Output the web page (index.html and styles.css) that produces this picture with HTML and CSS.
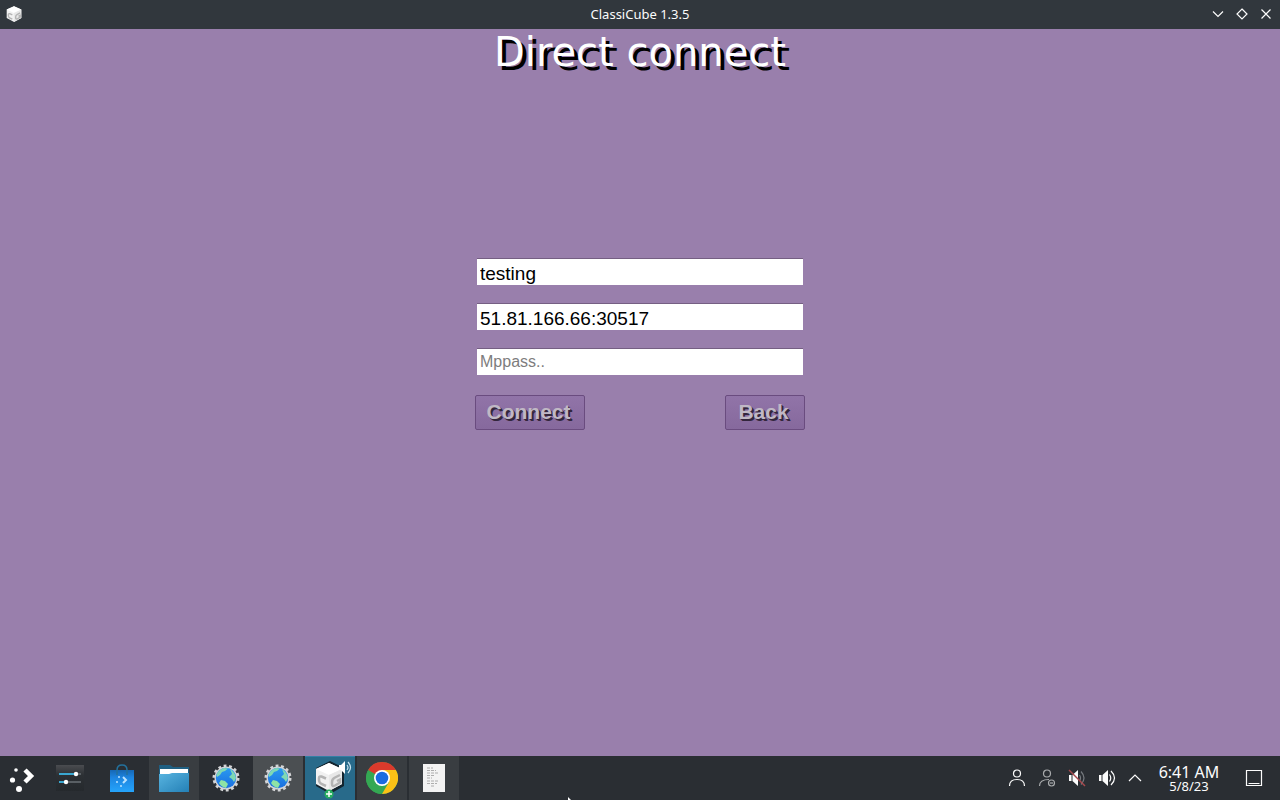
FILE: index.html
```html
<!DOCTYPE html>
<html lang="en">
<head>
    <meta charset="UTF-8">
    <meta name="viewport" content="width=device-width, initial-scale=1.0">
    <title>ClassiCube 1.3.5</title>
    <link rel="stylesheet" href="styles.css">
</head>
<body>
    <!-- shared icon shapes -->
    <svg class="defs" aria-hidden="true">
        <defs>
            <linearGradient id="globe-blue" x1="0" y1="0" x2="0" y2="1">
                <stop offset="0" stop-color="#2a9af0"/>
                <stop offset="1" stop-color="#1a6fe0"/>
            </linearGradient>
            <linearGradient id="bag-blue" x1="0" y1="0" x2="0" y2="1">
                <stop offset="0" stop-color="#1667b4"/>
                <stop offset="0.35" stop-color="#1d85e0"/>
                <stop offset="1" stop-color="#25a4fb"/>
            </linearGradient>
            <linearGradient id="folder-blue" x1="0" y1="0" x2="1" y2="1">
                <stop offset="0" stop-color="#58b4e0"/>
                <stop offset="1" stop-color="#2480b6"/>
            </linearGradient>
            <linearGradient id="settings-grey" x1="0" y1="0" x2="0" y2="1">
                <stop offset="0" stop-color="#4a4c50"/>
                <stop offset="0.4" stop-color="#2c3034"/>
                <stop offset="1" stop-color="#25292d"/>
            </linearGradient>
            <symbol id="cube" viewBox="0 0 32 32">
                <path d="M16 2L29 8V23L16 30L3 23V8Z" fill="#f1f1f1"/>
                <path d="M16 2L29 8L16 14L3 8Z" fill="#ffffff"/>
                <path d="M16 14L29 8V23L16 30Z" fill="#e8e8e8"/>
                <path d="M13 17.500L8.500 15.500Q6 15 6 17V19Q6 21.500 8.500 23L13 25" fill="none" stroke="#b4b4b4" stroke-width="2.500"/>
                <path d="M27 14L22 16.500Q19 18 19 21V23Q19 26 22 24.500L27 21.500V18.500L24 20" fill="none" stroke="#b4b4b4" stroke-width="2.500"/>
            </symbol>
            <symbol id="globe" viewBox="0 0 28 28">
                <circle cx="14" cy="14" r="12" fill="none" stroke="#d4d5d7" stroke-width="3" stroke-dasharray="2.800 2.584"/>
                <circle cx="14" cy="14" r="11.500" fill="#d4d5d7"/>
                <circle cx="14" cy="14" r="10.200" fill="url(#globe-blue)"/>
                <path d="M4.500 11Q6 6 12 4L16 4.500L13 7L10 8L8 11L5 13Z" fill="#7fd8b4"/>
                <path d="M18 5Q23 8 24 14L22 18L20 15L17 13L20 10Z" fill="#7fd8b4"/>
                <path d="M9 16L13 17L16 20L14 24Q9 23 7 19Z" fill="#8fe3a5"/>
            </symbol>
        </defs>
    </svg>

    <header class="titlebar">
        <svg class="app-icon" viewBox="0 0 32 32"><use href="#cube"/></svg>
        <span class="window-title">ClassiCube 1.3.5</span>
        <div class="window-buttons">
            <button type="button" aria-label="Minimize">
                <svg viewBox="0 0 12 12"><path d="M1 3.500L6 8.500L11 3.500"/></svg>
            </button>
            <button type="button" aria-label="Maximize">
                <svg viewBox="0 0 12 12"><path d="M6 1L11 6L6 11L1 6Z"/></svg>
            </button>
            <button type="button" aria-label="Close">
                <svg viewBox="0 0 12 12"><path d="M1.500 1.500L10.500 10.500M10.500 1.500L1.500 10.500"/></svg>
            </button>
        </div>
    </header>

    <main class="launcher">
        <h1>Direct connect</h1>
        <form class="connect-form">
            <input type="text" aria-label="Username" value="testing">
            <input type="text" aria-label="IP address and port" value="51.81.166.66:30517">
            <input type="text" aria-label="Mppass" placeholder="Mppass..">
            <div class="form-buttons">
                <button type="button" class="connect">Connect</button>
                <button type="button" class="back">Back</button>
            </div>
        </form>
    </main>

    <footer class="taskbar">
        <button type="button" class="start" aria-label="Application launcher">
            <svg viewBox="0 0 28 28" fill="#fff">
                <circle cx="9" cy="6" r="1.800"/>
                <circle cx="5.500" cy="16" r="2.600"/>
                <circle cx="12" cy="25" r="3"/>
                <path d="M18 6L24 12L18 18" fill="none" stroke="#fff" stroke-width="4.500"/>
            </svg>
        </button>
        <button type="button" class="task" aria-label="System settings">
            <svg viewBox="0 0 32 32">
                <path d="M2 3H30V29H2Z" fill="url(#settings-grey)"/>
                <path d="M5 12H22M5 20H12" stroke="#3aa7d0" stroke-width="2"/>
                <path d="M22 12H27M12 20H27" stroke="#6a7075" stroke-width="1.500"/>
                <circle cx="22" cy="12" r="2.200" fill="#fff"/>
                <circle cx="12" cy="20" r="2.200" fill="#fff"/>
            </svg>
        </button>
        <button type="button" class="task" aria-label="Software center">
            <svg viewBox="0 0 32 32">
                <path d="M4 8H28V30H4Z" fill="url(#bag-blue)"/>
                <path d="M11 13V8Q11 3 16 3Q21 3 21 8V13" fill="none" stroke="#23719c" stroke-width="1.500"/>
                <path d="M17 15L20 18L17 21" fill="none" stroke="#b9e2ff" stroke-width="2"/>
                <circle cx="13" cy="15" r="1" fill="#b9e2ff"/>
                <circle cx="11" cy="20" r="1" fill="#b9e2ff"/>
                <circle cx="15" cy="24" r="1" fill="#b9e2ff"/>
            </svg>
        </button>
        <button type="button" class="task open" aria-label="File manager">
            <svg viewBox="0 0 32 32">
                <path d="M1 3H12L15 5H31V14H1Z" fill="#1f5f82"/>
                <path d="M2 7H30V14H2Z" fill="#fff"/>
                <path d="M1 12H11L14 11H31V30H1Z" fill="url(#folder-blue)"/>
            </svg>
        </button>
        <button type="button" class="task" aria-label="Web browser">
            <svg class="globe" viewBox="0 0 28 28"><use href="#globe"/></svg>
        </button>
        <button type="button" class="task hovered" aria-label="Web browser window">
            <svg class="globe" viewBox="0 0 28 28"><use href="#globe"/></svg>
        </button>
        <button type="button" class="task active" aria-label="ClassiCube">
            <svg class="game" viewBox="0 0 44 44">
                <path d="M22 5L36 12V30L22 38L8 30V12Z" fill="#14242e"/>
                <svg x="5" y="5" width="34" height="34"><use href="#cube"/></svg>
                <path d="M31 9H33L37 5V18L33 14H31Z" fill="#fff"/>
                <path d="M39 9Q41 11.500 39 14M40 6Q45 11.500 40 17" fill="none" stroke="#c8e4f0" stroke-width="1.200"/>
                <circle cx="21" cy="38" r="4.500" fill="#27ae60"/>
                <path d="M18 38H24M21 35V41" stroke="#fff" stroke-width="1.500"/>
            </svg>
        </button>
        <button type="button" class="task open" aria-label="Chrome">
            <svg viewBox="0 0 32 32">
                <circle cx="16" cy="16" r="16" fill="#34a853"/>
                <path d="M16 16L2.140 8A16 16 0 0 1 29.860 8Z" fill="#db3a2c"/>
                <path d="M16 8H29.860A16 16 0 0 1 16 32L23 20Z" fill="#fbc116"/>
                <path d="M2.140 8L9.070 20L16 24L15 32A16 16 0 0 1 2.140 8Z" fill="#34a853"/>
                <circle cx="16" cy="16" r="8" fill="#fff"/>
                <circle cx="16" cy="16" r="6.300" fill="#1a6be0"/>
            </svg>
        </button>
        <button type="button" class="task open" aria-label="Text document">
            <svg viewBox="0 0 32 32">
                <path d="M5 2H27V30H5Z" fill="#f3f3f3"/>
                <path d="M9 6H15M9 8.500H18M9 11H20M9 13.500H17M9 16H14M9 19H21M9 21.500H19M13 24H17" stroke="#9b9b9b" stroke-width="0.800" stroke-dasharray="3 1"/>
            </svg>
        </button>

        <div class="tray">
            <button type="button" aria-label="User">
                <svg viewBox="0 0 18 18"><circle cx="9" cy="4.500" r="3.500"/><path d="M1.500 17Q1.500 10.500 9 10.500Q16.500 10.500 16.500 17"/></svg>
            </button>
            <button type="button" class="dim" aria-label="User offline">
                <svg viewBox="0 0 18 18"><circle cx="9" cy="4.500" r="3.500"/><path d="M1.500 17Q1.500 10.500 11 10.500"/><circle cx="13.500" cy="14" r="3"/><path d="M12 14H15"/></svg>
            </button>
            <button type="button" aria-label="Sound muted">
                <svg viewBox="0 0 18 18">
                    <path d="M1 6H3.500V12H1ZM4.500 6L10 1V17L4.500 12Z" fill="#fcfcfc" stroke="none"/>
                    <path d="M11.500 6Q13.500 9 11.500 12M13 2.500Q19 9 13 15.500" stroke="#777b80"/>
                    <path d="M1 1L17 17" stroke="#a8484d" stroke-width="1.500"/>
                </svg>
            </button>
            <button type="button" aria-label="Volume">
                <svg viewBox="0 0 18 18">
                    <path d="M1 6H3.500V12H1ZM4.500 6L10 1V17L4.500 12Z" fill="#fcfcfc" stroke="none"/>
                    <path d="M11.500 5.500Q14 9 11.500 12.500M13 2Q20 9 13 16"/>
                </svg>
            </button>
            <button type="button" class="expand" aria-label="Show hidden icons">
                <svg viewBox="0 0 18 18"><path d="M3 12L9 6L15 12"/></svg>
            </button>
        </div>
        <div class="clock">
            <span class="time">6:41 AM</span>
            <span class="date">5/8/23</span>
        </div>
        <button type="button" class="show-desktop" aria-label="Show desktop">
            <svg viewBox="0 0 18 18"><path d="M1.500 1.500H16.500V16.500H1.500ZM3.500 14.500H14.500"/></svg>
        </button>
    </footer>
    <svg class="pointer" viewBox="0 0 4 4" aria-hidden="true"><path d="M0 0L4 4H0Z" fill="#fff"/></svg>
</body>
</html>
```
FILE: styles.css
```css
* {
    margin: 0;
    padding: 0;
    box-sizing: border-box;
}
body {
    min-height: 100vh;
    display: flex;
    flex-direction: column;
    background: #997fac;
    font-family: "Noto Sans", sans-serif;
    color: #fcfcfc;
}
button {
    border: none;
    background: none;
    color: inherit;
    font: inherit;
}
svg {
    display: block;
    flex: none;
}
.defs {
    position: absolute;
    width: 0;
    height: 0;
}

/* window title bar */
.titlebar {
    height: 29px;
    padding: 0 8px 2px 5px;
    display: grid;
    grid-template-columns: 1fr auto 1fr;
    align-items: center;
    background: #31373d;
}
.app-icon {
    width: 18px;
    height: 18px;
}
.window-title {
    padding-left: 3px;
    font-size: 13px;
}
.window-buttons {
    display: flex;
    justify-content: flex-end;
    gap: 12px;
}
.window-buttons svg {
    width: 12px;
    height: 12px;
    fill: none;
    stroke: #fcfcfc;
    stroke-width: 1.2;
}

/* launcher screen */
.launcher {
    flex: 1;
    display: flex;
    flex-direction: column;
    align-items: center;
}
h1 {
    height: 48px;
    font-family: "DejaVu Sans", sans-serif;
    font-size: 40px;
    font-weight: normal;
    line-height: 46px;
    color: #fff;
    text-shadow: 4px 4px 0 #000;
}
.connect-form {
    width: 330px;
    max-width: 100%;
    margin-top: 181px;
    display: flex;
    flex-direction: column;
    gap: 18px;
    font-family: "Liberation Sans", Arial, sans-serif;
}
.connect-form input {
    height: 27px;
    margin: 0 2px;
    padding: 3px 3px 0;
    border: none;
    border-top: 1px solid #755f83;
    background: #fff;
    font-family: inherit;
    font-size: 19px;
    color: #000;
    outline: none;
}
.connect-form input:placeholder-shown {
    padding-top: 0;
    padding-bottom: 2px;
}
.connect-form input::placeholder {
    font-size: 16px;
    color: #7d7d7d;
    opacity: 1;
}
.form-buttons {
    margin-top: 2px;
    display: flex;
    justify-content: space-between;
}
.form-buttons button {
    height: 35px;
    padding: 0 3px 2px 0;
    border: 1px solid #6a4c7f;
    border-radius: 2px;
    background: linear-gradient(#9174a8, #86699d);
    font-size: 21px;
    font-weight: bold;
    color: #c0b8c5;
    text-shadow: 1px 1px 0 #33263d, 2px 2px 0 #33263d;
}
.form-buttons .connect {
    width: 110px;
}
.form-buttons .back {
    width: 80px;
}

/* bottom panel */
.taskbar {
    height: 44px;
    display: flex;
    background: #2a2e33;
}
.taskbar button {
    display: flex;
    align-items: center;
    justify-content: center;
}
.taskbar .start {
    width: 44px;
    padding-right: 2px;
}
.start svg {
    width: 28px;
    height: 28px;
}
.taskbar .task {
    width: 50px;
    margin: 0 1px;
}
.task svg {
    width: 32px;
    height: 32px;
}
.task .globe {
    width: 28px;
    height: 28px;
}
.task .game {
    width: 44px;
    height: 44px;
}
.task.open {
    background: #393d41;
}
.task.hovered {
    background: #4b4f52;
}
.task.active {
    background: #286a8a;
    box-shadow: inset 0 1px #3480a5;
}
.tray {
    margin-left: auto;
    display: flex;
}
.tray button {
    width: 30px;
}
.tray .expand {
    width: 26px;
}
.tray svg,
.show-desktop svg {
    width: 18px;
    height: 18px;
    fill: none;
    stroke: #fcfcfc;
    stroke-width: 1.2;
}
.tray .dim svg {
    stroke: #a9abad;
}
.clock {
    width: 82px;
    display: flex;
    flex-direction: column;
    align-items: center;
    justify-content: center;
}
.time {
    font-size: 16px;
    line-height: 16px;
}
.date {
    font-size: 13px;
    line-height: 12px;
}
.taskbar .show-desktop {
    width: 50px;
    padding-right: 2px;
}
.pointer {
    position: absolute;
    left: 568px;
    bottom: 0;
    width: 3px;
    height: 3px;
}
```
